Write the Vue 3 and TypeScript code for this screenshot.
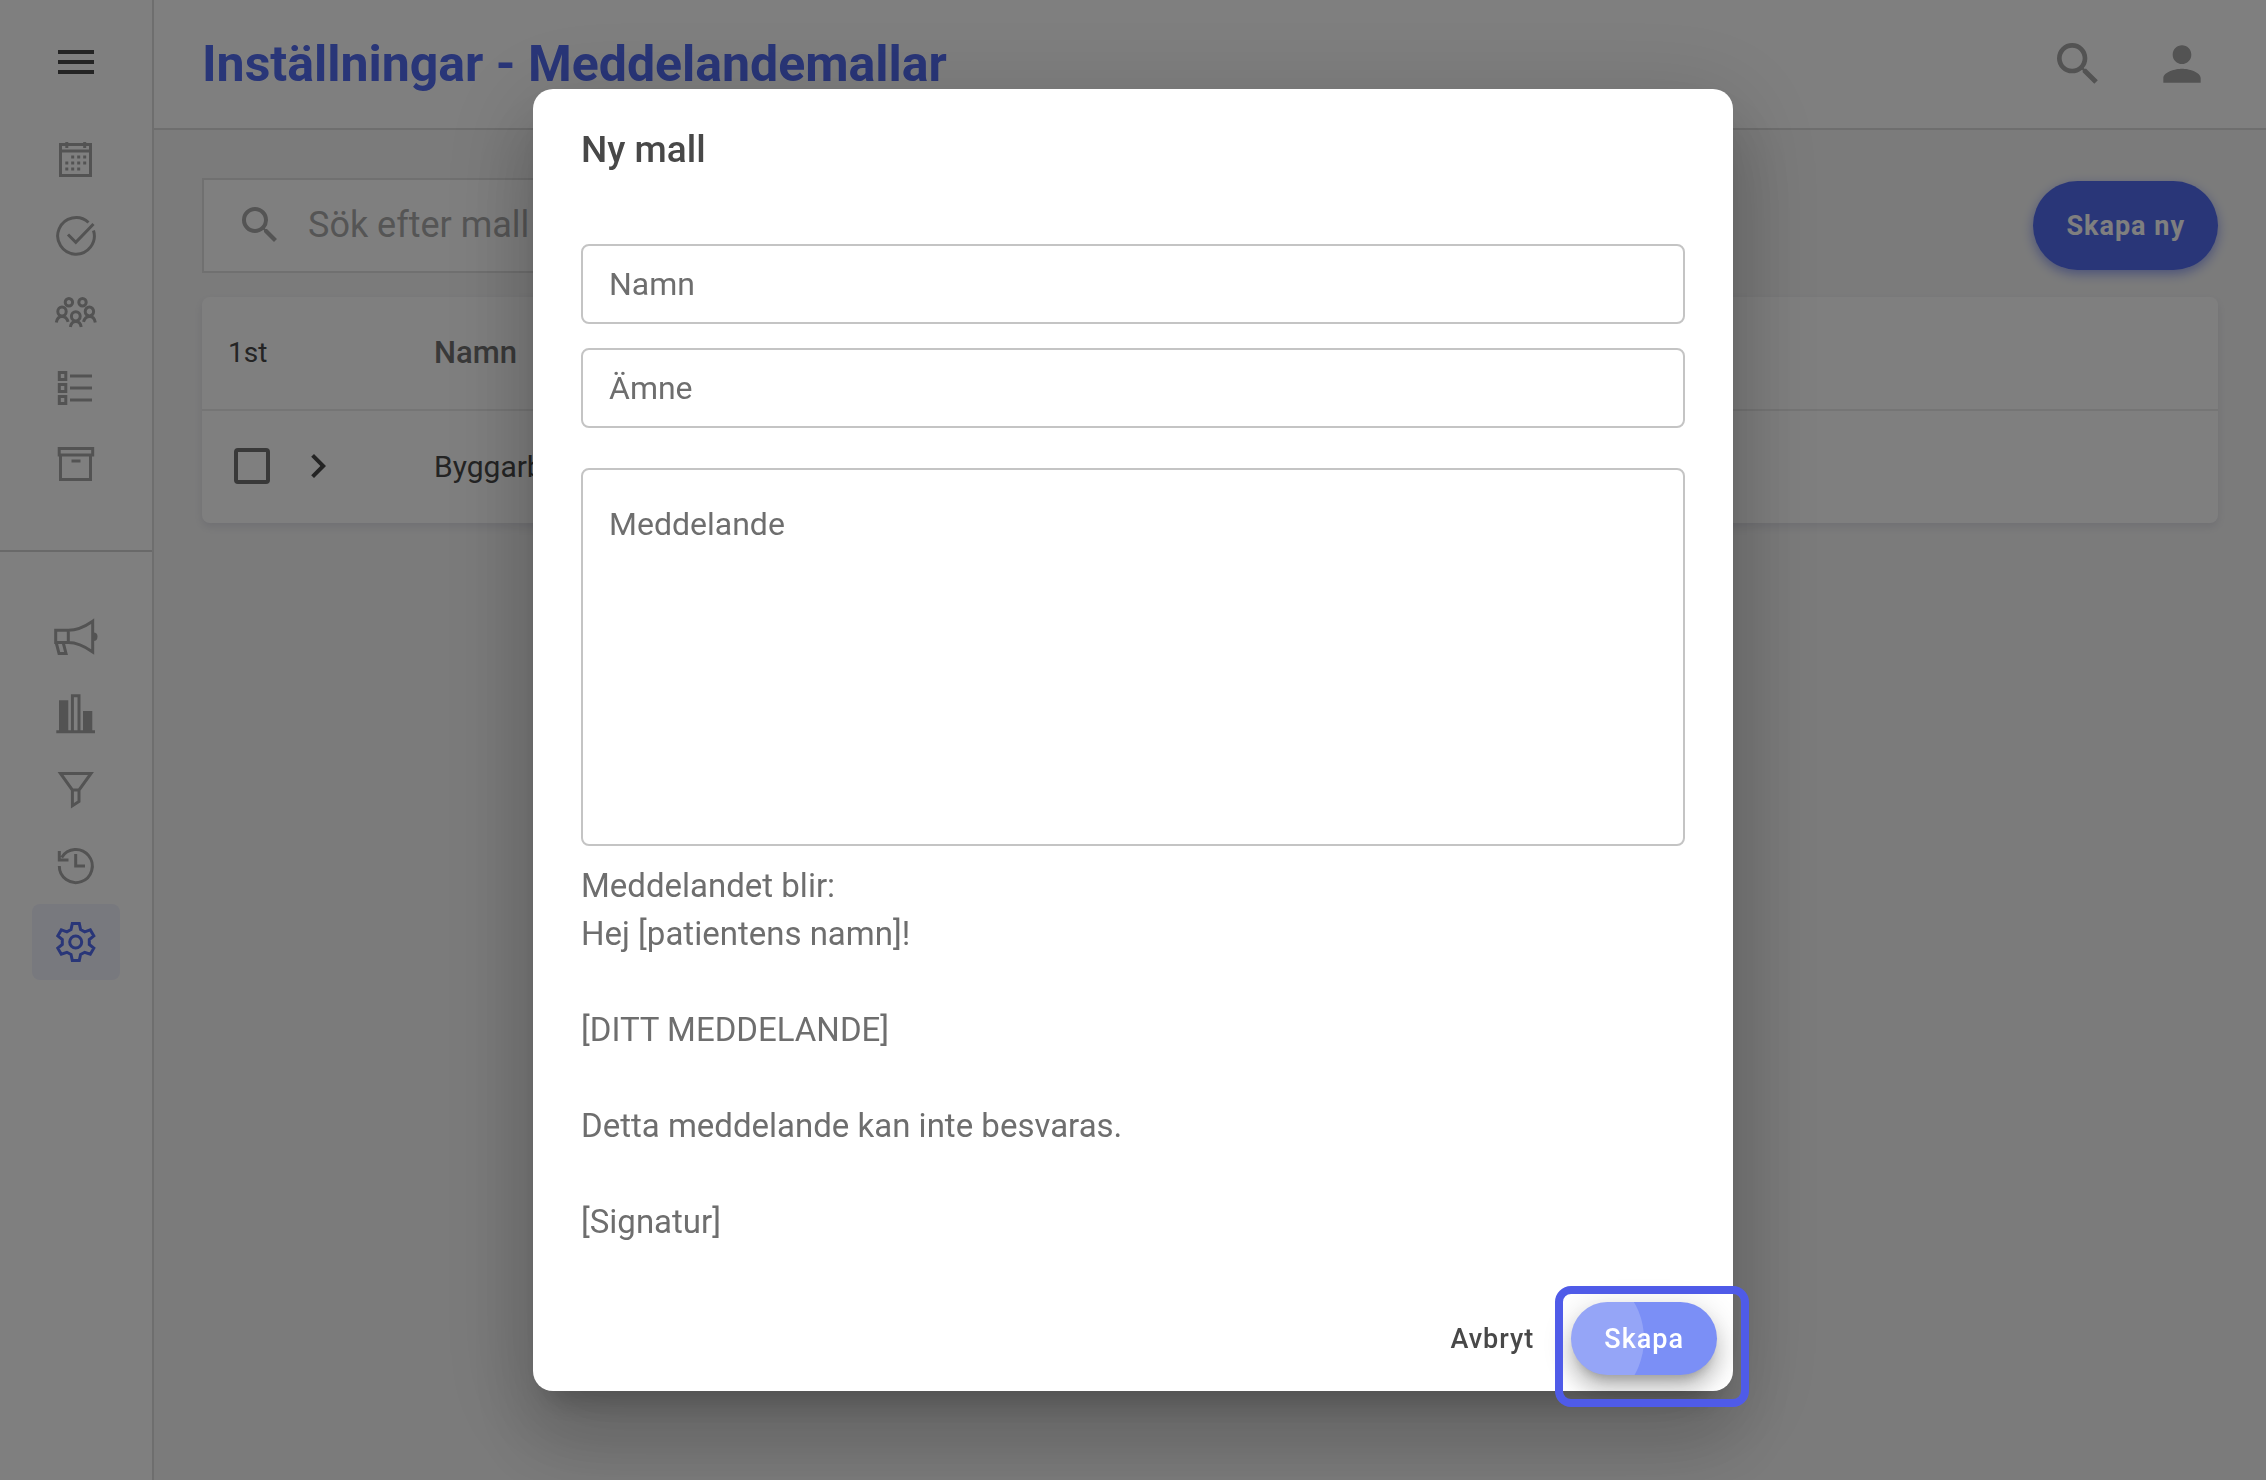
<script setup lang="ts">
import { ref } from 'vue'

interface NavItem {
  label: string
  icon: string
  active?: boolean
}

const primaryNav: NavItem[] = [
  { label: 'Kalender', icon: 'calendar' },
  { label: 'Uppgifter', icon: 'check' },
  { label: 'Patienter', icon: 'group' },
  { label: 'Listor', icon: 'list' },
  { label: 'Arkiv', icon: 'archive' },
]

const secondaryNav: NavItem[] = [
  { label: 'Utskick', icon: 'megaphone' },
  { label: 'Statistik', icon: 'bars' },
  { label: 'Filter', icon: 'funnel' },
  { label: 'Historik', icon: 'history' },
  { label: 'Inställningar', icon: 'gear', active: true },
]

/* Stroked outlines and solid parts of the navigation icons, on a 48 unit grid */
const strokes: Record<string, string> = {
  calendar: 'M8.5 8.5h30v31h-30zM8.5 15h30M14.8 6v6M32.7 6v6',
  check: 'M36.5 10.5A18.3 18.3 0 1 0 41.5 18.5M16 22.5l7.8 7.8L41.5 12',
  group:
    'M13.2 14.3a3.7 3.7 0 1 0 7.4 0a3.7 3.7 0 1 0-7.4 0M26.8 14.3a3.7 3.7 0 1 0 7.4 0a3.7 3.7 0 1 0-7.4 0M5.8 23.5a4.2 4.4 0 1 0 8.4 0a4.2 4.4 0 1 0-8.4 0M33.2 23.5a4.2 4.4 0 1 0 8.4 0a4.2 4.4 0 1 0-8.4 0M19.4 28.3a4.4 4.6 0 1 0 8.8 0a4.4 4.6 0 1 0-8.8 0M4.3 34.5c.6-3.6 2.8-6 5.7-6s5.2 2.4 6.1 5.4M31.5 33.9c.9-3 3.2-5.4 6.1-5.4s5.1 2.4 5.7 6M18.4 39c.5-3.4 2.4-5.6 5.4-5.6s4.9 2.2 5.4 5.6',
  list: 'M7.3 8.5h6.5v7H7.3zM7.3 20.5h6.5v7H7.3zM7.3 32.5h6.5v7H7.3zM18 12h22M18 24h22M18 36h22',
  archive: 'M7.2 8.5h33.5V15H7.2zM8.5 15v24.5h30V15M19.5 21h9',
  megaphone:
    'M3.7 16.3h12.6v12.2H3.7zM16.3 16.3C25 16.3 33 12.5 40.7 7.2v30.7C33 32.5 25 28.5 16.3 28.5M4.3 29L7 39.4h7L11.3 29',
  bars: 'M4.3 41.7H43M20.4 41V5.7H27V41',
  funnel: 'M8.5 7.5H39L27 24v11.5l-6.6 4.3V24zM20.4 24H27',
  history: 'M7.3 24A16.5 16.5 0 1 0 9.7 15.5M7.3 9v9h9.2M23.7 12v12H33',
  gear: 'M20.3 5.6h7l1.3 6 4.1 2.2 5.6-1.9 3.5 6-4.5 3.6v5l4.5 3.7-3.5 6-5.6-1.9-4.1 2.2-1.3 5.9h-7l-1.3-5.9-4.1-2.2-5.6 1.9-3.5-6 4.5-3.7v-5l-4.5-3.6 3.5-6 5.6 1.9 4.1-2.2zM17.7 24a6 6 0 1 0 12 0a6 6 0 1 0-12 0',
}

const fills: Record<string, string> = {
  calendar:
    'M19.2 19.5h3v3h-3zM25.2 19.5h3v3h-3zM31.2 19.5h3v3h-3zM13.3 25.5h3v3h-3zM19.2 25.5h3v3h-3zM25.2 25.5h3v3h-3zM31.2 25.5h3v3h-3zM13.3 31.5h3v3h-3zM19.2 31.5h3v3h-3zM25.2 31.5h3v3h-3z',
  bars: 'M7 10.3h9.3V41H7zM31 21h9.3v20H31z',
  megaphone: 'M41.5 18.5a4 4.2 0 0 1 0 8.4z',
}

const searchPath =
  'M15.5 14h-.79l-.28-.27A6.471 6.471 0 0 0 16 9.5 6.5 6.5 0 1 0 9.5 16c1.61 0 3.09-.59 4.23-1.57l.27.28v.79l5 4.99L20.49 19l-4.99-5zm-6 0C7.01 14 5 11.99 5 9.5S7.01 5 9.5 5 14 7.01 14 9.5 11.99 14 9.5 14z'

/* An empty string stands for a blank line */
const previewLines: string[] = [
  'Meddelandet blir:',
  'Hej [patientens namn]!',
  '',
  '[DITT MEDDELANDE]',
  '',
  'Detta meddelande kan inte besvaras.',
  '',
  '[Signatur]',
]

const query = ref('')
const name = ref('')
const subject = ref('')
const message = ref('')
const selected = ref(false)
</script>

<template>
  <div class="app">
    <aside class="sidebar">
      <button class="icon-button menu" type="button" aria-label="Meny">
        <svg viewBox="0 0 24 24"><path d="M3 18h18v-2H3v2zm0-5h18v-2H3v2zm0-7v2h18V6H3z" /></svg>
      </button>
      <nav class="group">
        <a v-for="item in primaryNav" :key="item.icon" class="nav-item" href="#" :aria-label="item.label">
          <svg viewBox="0 0 48 48">
            <path class="stroke" :d="strokes[item.icon]" />
            <path v-if="fills[item.icon]" :d="fills[item.icon]" />
          </svg>
        </a>
      </nav>
      <nav class="group secondary">
        <a
          v-for="item in secondaryNav"
          :key="item.icon"
          class="nav-item"
          :class="{ active: item.active }"
          href="#"
          :aria-label="item.label"
        >
          <svg viewBox="0 0 48 48">
            <path class="stroke" :d="strokes[item.icon]" />
            <path v-if="fills[item.icon]" :d="fills[item.icon]" />
          </svg>
        </a>
      </nav>
    </aside>

    <div class="main">
      <header class="topbar">
        <h1>Inställningar - Meddelandemallar</h1>
        <div class="tools">
          <button class="icon-button large" type="button" aria-label="Sök">
            <svg viewBox="0 0 24 24"><path :d="searchPath" /></svg>
          </button>
          <button class="icon-button large" type="button" aria-label="Konto">
            <svg viewBox="0 0 24 24">
              <path
                d="M12 12c2.21 0 4-1.79 4-4s-1.79-4-4-4-4 1.79-4 4 1.79 4 4 4zm0 2c-2.67 0-8 1.34-8 4v2h16v-2c0-2.66-5.33-4-8-4z"
              />
            </svg>
          </button>
        </div>
      </header>

      <main class="content">
        <div class="actions">
          <label class="search">
            <svg viewBox="0 0 24 24"><path :d="searchPath" /></svg>
            <input v-model="query" type="search" placeholder="Sök efter mall" aria-label="Sök efter mall" />
          </label>
          <button class="create" type="button">Skapa ny</button>
        </div>
        <table class="templates">
          <thead>
            <tr>
              <th class="count" scope="col">1st</th>
              <th scope="col">Namn</th>
            </tr>
          </thead>
          <tbody>
            <tr>
              <td>
                <div class="controls">
                  <input v-model="selected" class="checkbox" type="checkbox" aria-label="Välj mall" />
                  <button class="expand" type="button" aria-label="Visa mall">
                    <svg viewBox="0 0 24 24"><path d="M10 6 8.59 7.41 13.17 12l-4.58 4.59L10 18l6-6z" /></svg>
                  </button>
                </div>
              </td>
              <td>Byggarb</td>
            </tr>
          </tbody>
        </table>
      </main>
    </div>

    <div class="backdrop">
      <form class="dialog" role="dialog" aria-modal="true" aria-labelledby="dialog-title" @submit.prevent>
        <h2 id="dialog-title">Ny mall</h2>
        <div class="fields">
          <input v-model="name" class="field" type="text" placeholder="Namn" aria-label="Namn" />
          <input v-model="subject" class="field" type="text" placeholder="Ämne" aria-label="Ämne" />
          <textarea v-model="message" class="field area" placeholder="Meddelande" aria-label="Meddelande"></textarea>
        </div>
        <div class="preview">
          <p v-for="(line, index) in previewLines" :key="index">{{ line }}</p>
        </div>
        <div class="buttons">
          <button class="cancel" type="button">Avbryt</button>
          <div class="submit-wrap">
            <button class="submit" type="submit">
              <span class="ripple"></span>
              <span class="caption">Skapa</span>
            </button>
            <span class="focus-frame"></span>
          </div>
        </div>
      </form>
    </div>
  </div>
</template>

<style>
body {
  margin: 0;
  background: #f7f7f7;
}
</style>

<style scoped>
* {
  box-sizing: border-box;
}

.app {
  display: flex;
  min-height: 100vh;
  font-family: Roboto, sans-serif;
  font-size: 30px;
  color: #484848;
}

button,
input,
textarea {
  margin: 0;
  font-family: inherit;
}

button {
  padding: 0;
  border: 0;
  background: none;
  color: inherit;
  cursor: pointer;
}

svg {
  display: block;
  flex: none;
  width: 48px;
  height: 48px;
  fill: currentColor;
}

.sidebar {
  flex: none;
  display: flex;
  flex-direction: column;
  width: 154px;
  border-right: 2px solid #dcdcdc;
  background: #fff;
}

.icon-button {
  color: #a6a6a6;
}

.icon-button.large svg {
  width: 56px;
  height: 56px;
}

.menu {
  align-self: center;
  margin-top: 38px;
  color: #484848;
}

.group {
  display: flex;
  flex-direction: column;
  align-items: center;
  padding: 36px 0 48px;
}

.secondary {
  padding-top: 48px;
  border-top: 2px solid #d2d2d2;
}

.nav-item {
  display: flex;
  align-items: center;
  justify-content: center;
  width: 88px;
  height: 76px;
  border-radius: 8px;
  color: #a6a6a6;
}

.nav-item.active {
  background: #f1f2fd;
  color: #536cf0;
}

.stroke {
  fill: none;
  stroke: currentColor;
  stroke-width: 3;
}

.main {
  flex: 1;
  min-width: 0;
}

.topbar {
  display: flex;
  align-items: center;
  justify-content: space-between;
  height: 130px;
  padding: 0 56px 0 48px;
  border-bottom: 2px solid #dcdcdc;
  background: #fff;
}

h1 {
  margin: 0;
  font-size: 50px;
  font-weight: 700;
  line-height: 60px;
  color: #536cf0;
}

.tools {
  display: flex;
  gap: 48px;
}

.content {
  padding: 48px;
}

.actions {
  display: flex;
  align-items: center;
  justify-content: space-between;
  margin-bottom: 24px;
}

.search {
  display: flex;
  align-items: center;
  gap: 24px;
  width: 50%;
  height: 95px;
  padding: 0 32px 2px;
  border: 2px solid #e0e0e0;
  background: #fff;
  color: #a8a8a8;
}

.search input {
  flex: 1;
  min-width: 0;
  padding: 0;
  border: 0;
  outline: 0;
  background: none;
  font-size: 36px;
}

::placeholder {
  color: inherit;
  opacity: 1;
}

.search ::placeholder {
  color: #aaa;
}

.create {
  height: 89px;
  padding: 0 33px;
  border-radius: 45px;
  background: #536cf0;
  box-shadow: 0 4px 12px rgba(83, 108, 240, 0.6);
  font-size: 27px;
  font-weight: 700;
  letter-spacing: 1px;
  color: #fff;
}

.templates {
  width: 100%;
  border-collapse: separate;
  border-spacing: 0;
  border-radius: 8px;
  background: #fff;
  box-shadow: 0 4px 10px rgba(60, 60, 110, 0.12);
}

th,
td {
  height: 112px;
  padding: 0 0 2px;
  text-align: left;
}

th {
  height: 114px;
  border-bottom: 2px solid #ebebeb;
  font-size: 31px;
  font-weight: 500;
  color: #727272;
}

th.count {
  width: 232px;
  padding-left: 26px;
  font-size: 28px;
  font-weight: 400;
  color: #484848;
}

.controls {
  display: flex;
  align-items: center;
  gap: 24px;
  padding-left: 32px;
}

.checkbox {
  appearance: none;
  width: 36px;
  height: 36px;
  border: 4px solid #727272;
  border-radius: 4px;
}

.backdrop {
  position: fixed;
  inset: 0;
  display: flex;
  align-items: center;
  justify-content: center;
  background: rgba(0, 0, 0, 0.5);
}

.dialog {
  width: 1200px;
  max-width: 90%;
  border-radius: 20px;
  background: #fff;
  box-shadow:
    0 22px 30px -14px rgba(0, 0, 0, 0.2),
    0 48px 76px 6px rgba(0, 0, 0, 0.14),
    0 18px 92px 16px rgba(0, 0, 0, 0.12);
}

h2 {
  margin: 0;
  padding: 37px 48px 70px;
  font-size: 37px;
  font-weight: 500;
  line-height: 48px;
}

.fields {
  display: flex;
  flex-direction: column;
  gap: 24px;
  padding: 0 48px;
}

.field {
  width: 100%;
  height: 80px;
  padding: 0 26px;
  border: 2px solid #c4c4c4;
  border-radius: 8px;
  outline: 0;
  background: #fff;
  font-size: 32px;
  line-height: 48px;
  color: #6e6e6e;
}

.area {
  height: 378px;
  margin-top: 16px;
  padding-top: 30px;
  resize: none;
}

.preview {
  padding: 16px 48px 40px;
  font-size: 33px;
  line-height: 48px;
  color: #6e6e6e;
}

.preview p {
  min-height: 48px;
  margin: 0;
}

.buttons {
  display: flex;
  align-items: center;
  justify-content: flex-end;
  gap: 4px;
  padding: 16px;
}

.cancel,
.submit {
  height: 73px;
  padding: 0 33px;
  font-size: 27px;
  font-weight: 500;
  letter-spacing: 1px;
}

.submit-wrap {
  position: relative;
}

.submit {
  position: relative;
  display: block;
  overflow: hidden;
  border-radius: 37px;
  background: #7b8ff6;
  box-shadow:
    0 10px 10px -6px rgba(0, 0, 0, 0.2),
    0 16px 20px 2px rgba(0, 0, 0, 0.14),
    0 6px 28px 4px rgba(0, 0, 0, 0.12);
  color: #fff;
}

.ripple {
  position: absolute;
  top: 50%;
  left: 0;
  width: 146px;
  height: 146px;
  margin: -73px;
  border-radius: 50%;
  background: rgba(255, 255, 255, 0.2);
}

.caption {
  position: relative;
}

.focus-frame {
  position: absolute;
  inset: -16px -32px -32px -16px;
  border: 8px solid #4f5be8;
  border-radius: 16px;
  pointer-events: none;
}
</style>
